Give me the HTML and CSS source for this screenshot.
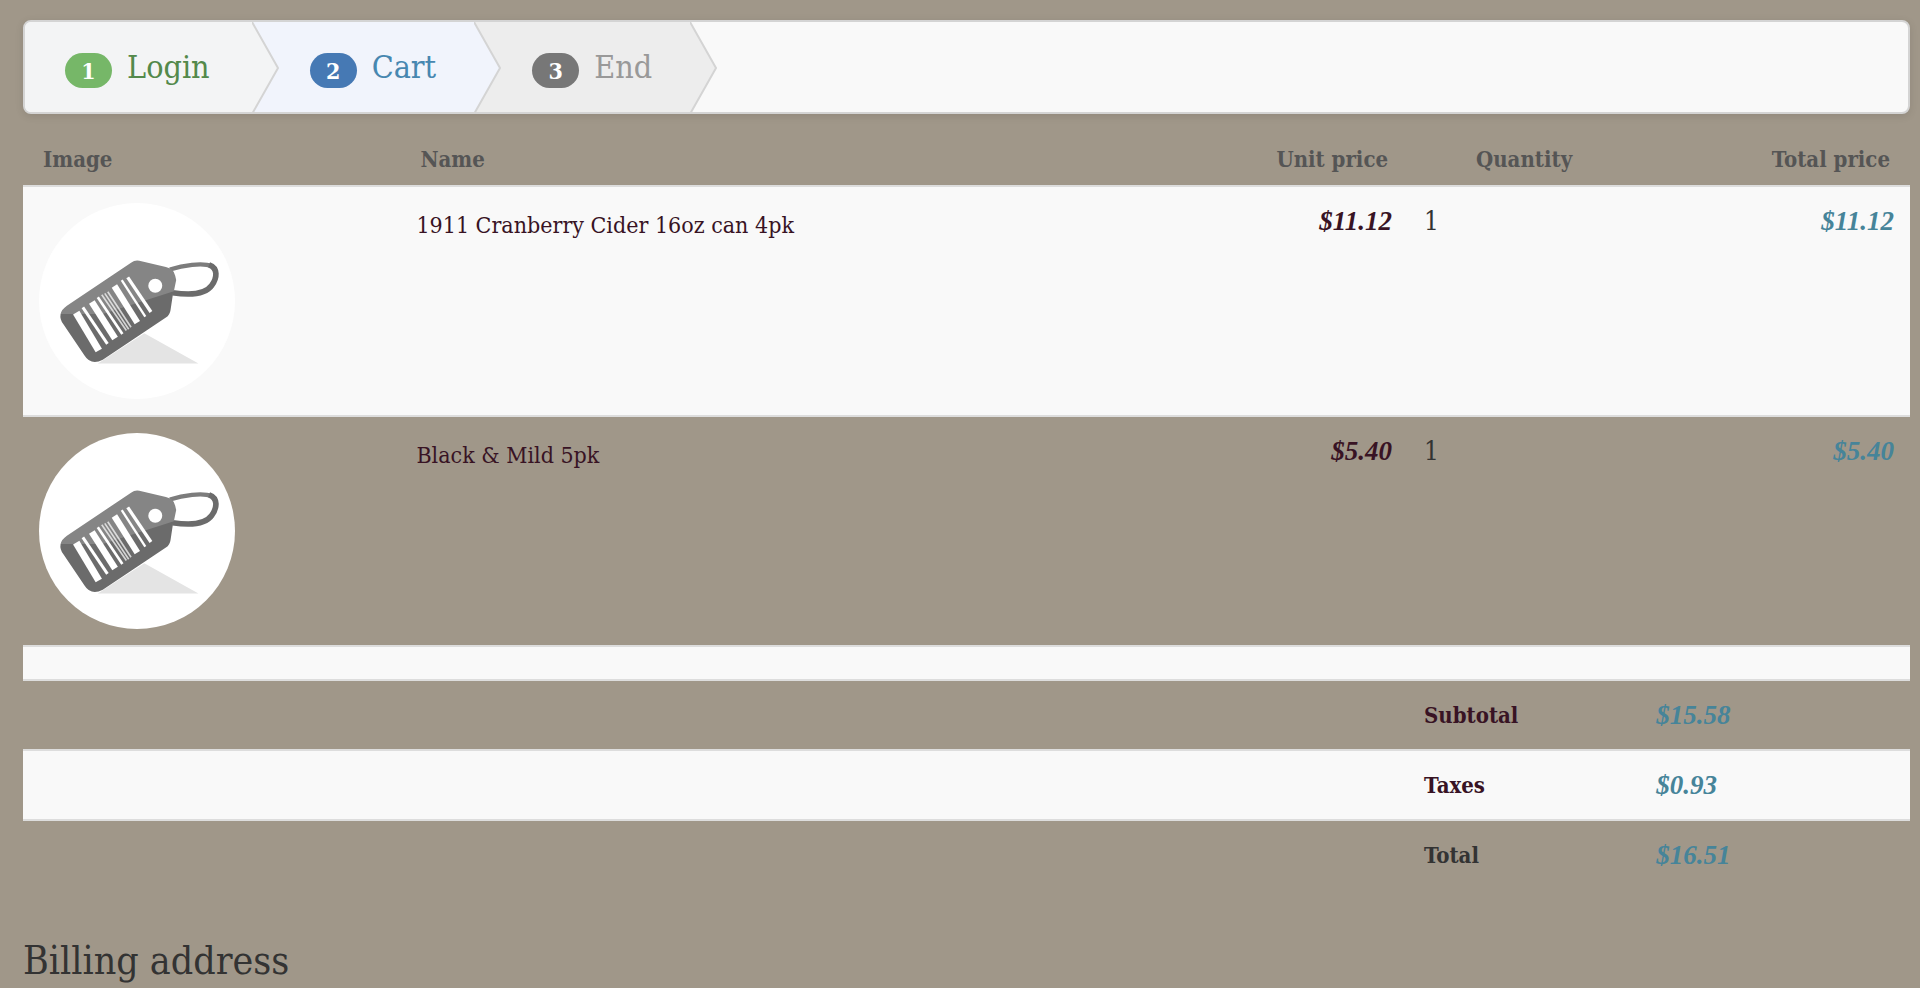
FILE: index.html
```html
<!DOCTYPE html>
<html lang="en">
<head>
    <meta charset="UTF-8">
    <meta name="viewport" content="width=device-width, initial-scale=1.0">
    <title>Order</title>
    <link rel="stylesheet" href="styles.css">
</head>
<body>
    <svg class="defs" aria-hidden="true">
        <symbol id="tag" viewBox="58 66 590 590">
            <path fill="#e4e4e4" d="M235 549L375 458L538 549Z"/>
            <g fill="none" stroke-width="13">
                <path stroke="#7c7c7c" d="M452 266C490 254 550 244 578 256"/>
                <path stroke="#6b6b6b" stroke-width="17" d="M570 252C598 262 594 292 578 314C560 340 520 345 460 336"/>
            </g>
            <path fill="#6b6b6b" d="M123 400Q120 416 131 430L195 525Q214 556 250 538L440 411Q452 403 454 388L464 322Z"/>
            <path fill="#858585" d="M123 400Q126 386 142 375L335 246Q347 237 360 240L440 259Q464 264 468 285L471 298L464 332L370 362L250 400Z"/>
            <circle cx="408" cy="315" r="21" fill="#fff"/>
            <g stroke="#fff">
                <path stroke-width="22" d="M170 396L238 510"/>
                <path stroke-width="9" d="M190 380L264 490"/>
                <path stroke-width="20" d="M217 364L287 474"/>
                <path stroke-width="8" d="M235 350L309 460"/>
                <path stroke-width="5" opacity="0.7" d="M247 342L321 450M256 338L328 446M265 333L335 440"/>
                <path stroke-width="19" d="M285 316L354 426"/>
                <path stroke-width="7" d="M307 298L378 408"/>
                <path stroke-width="10" d="M325 290L395 394"/>
            </g>
        </symbol>
    </svg>

    <main class="container">
        <ol class="wizard">
            <li class="step complete">
                <span class="badge">1</span>
                <span class="label">Login</span>
                <svg class="chevron" viewBox="0 0 28 92" preserveAspectRatio="none"><path d="M0 0L26 46L0 92"/></svg>
            </li>
            <li class="step active">
                <span class="badge">2</span>
                <span class="label">Cart</span>
                <svg class="chevron" viewBox="0 0 28 92" preserveAspectRatio="none"><path d="M0 0L26 46L0 92"/></svg>
            </li>
            <li class="step">
                <span class="badge">3</span>
                <span class="label">End</span>
                <svg class="chevron" viewBox="0 0 28 92" preserveAspectRatio="none"><path d="M0 0L26 46L0 92"/></svg>
            </li>
        </ol>

        <table class="cart">
            <colgroup>
                <col class="col-image">
                <col class="col-name">
                <col class="col-unit">
                <col class="col-quantity">
                <col class="col-total">
            </colgroup>
            <thead>
                <tr>
                    <th>Image</th>
                    <th>Name</th>
                    <th class="right">Unit price</th>
                    <th class="center">Quantity</th>
                    <th class="right">Total price</th>
                </tr>
            </thead>
            <tbody>
                <tr>
                    <td><svg class="thumb" role="img" aria-label="Product"><use href="#tag"/></svg></td>
                    <td class="name">1911 Cranberry Cider 16oz can 4pk</td>
                    <td class="price right">$11.12</td>
                    <td class="quantity">1</td>
                    <td class="price total right">$11.12</td>
                </tr>
                <tr>
                    <td><svg class="thumb" role="img" aria-label="Product"><use href="#tag"/></svg></td>
                    <td class="name">Black &amp; Mild 5pk</td>
                    <td class="price right">$5.40</td>
                    <td class="quantity">1</td>
                    <td class="price total right">$5.40</td>
                </tr>
                <tr>
                    <td colspan="5"></td>
                </tr>
                <tr>
                    <td colspan="3"></td>
                    <td class="summary">Subtotal</td>
                    <td class="price total">$15.58</td>
                </tr>
                <tr>
                    <td colspan="3"></td>
                    <td class="summary">Taxes</td>
                    <td class="price total">$0.93</td>
                </tr>
                <tr>
                    <td colspan="3"></td>
                    <td class="summary grand">Total</td>
                    <td class="price total">$16.51</td>
                </tr>
            </tbody>
        </table>

        <h2>Billing address</h2>
    </main>
</body>
</html>
```

FILE: styles.css
```css
body {
    margin: 0;
    background-color: #a09789;
    color: #333;
    font-family: "Roboto Slab", "DejaVu Serif Condensed", "DejaVu Serif", serif;
    font-size: 22px;
    line-height: 36px;
}

.defs {
    display: none;
}

.container {
    padding: 20px 10px 0 23px;
}

.wizard {
    display: flex;
    margin: 0 0 20px;
    padding: 0;
    list-style: none;
    background-color: #f9f9f9;
    border: 2px solid #d4d4d4;
    border-radius: 8px;
    box-shadow: 0 2px 8px rgba(0, 0, 0, 0.1);
}

.step {
    position: relative;
    display: flex;
    align-items: center;
    gap: 15px;
    height: 90px;
    padding: 0 38px 0 58px;
    box-sizing: border-box;
    background-color: #ededed;
    color: #999;
}

.step:first-child {
    padding: 0 42px 0 40px;
    border-radius: 6px 0 0 6px;
}

.step.complete {
    background-color: #f3f4f5;
    color: #53894b;
}

.step.active {
    background-color: #f1f4fc;
    color: #4787b0;
}

.badge {
    width: 47px;
    height: 35px;
    margin-top: 6px;
    border-radius: 18px;
    background-color: #777;
    color: #fff;
    font-size: 23px;
    font-weight: bold;
    text-align: center;
}

.complete .badge {
    background-color: #76b768;
}

.active .badge {
    background-color: #4679b4;
}

.label {
    font-size: 32px;
    font-weight: 300;
}

.chevron {
    position: absolute;
    top: 0;
    left: 100%;
    z-index: 1;
    width: 28px;
    height: 92px;
    fill: #ededed;
    stroke: #d4d4d4;
    stroke-width: 2;
}

.complete .chevron {
    fill: #f3f4f5;
}

.active .chevron {
    fill: #f1f4fc;
}

.cart {
    width: 100%;
    border-collapse: collapse;
    table-layout: fixed;
}

.col-image {
    width: 20%;
}

.col-name {
    width: 40%;
}

.col-unit {
    width: 13.4%;
}

.col-quantity {
    width: 12.3%;
}

.cart th {
    padding: 7px 20px 8px;
    color: #555;
    text-align: left;
}

.cart td {
    padding: 16px;
    border-top: 2px solid #ddd;
    vertical-align: top;
}

.cart tbody tr:nth-child(odd) {
    background-color: #f9f9f9;
}

.cart .right {
    text-align: right;
}

.cart .center {
    text-align: center;
}

.thumb {
    display: block;
    width: 196px;
    height: 196px;
    border-radius: 50%;
    background-color: #fff;
}

.cart .name {
    padding-top: 20px;
    color: #381324;
    font-size: 23px;
}

.price {
    color: #381324;
    font-family: "Liberation Serif", serif;
    font-size: 27px;
    font-style: italic;
    font-weight: bold;
}

.price.total {
    color: #468499;
}

.quantity {
    font-size: 26px;
}

.summary {
    color: #381324;
    font-weight: bold;
}

.summary.grand {
    color: #333;
}

h2 {
    margin: 50px 0 0;
    font-size: 39px;
    font-weight: 300;
    line-height: 44px;
}
```
